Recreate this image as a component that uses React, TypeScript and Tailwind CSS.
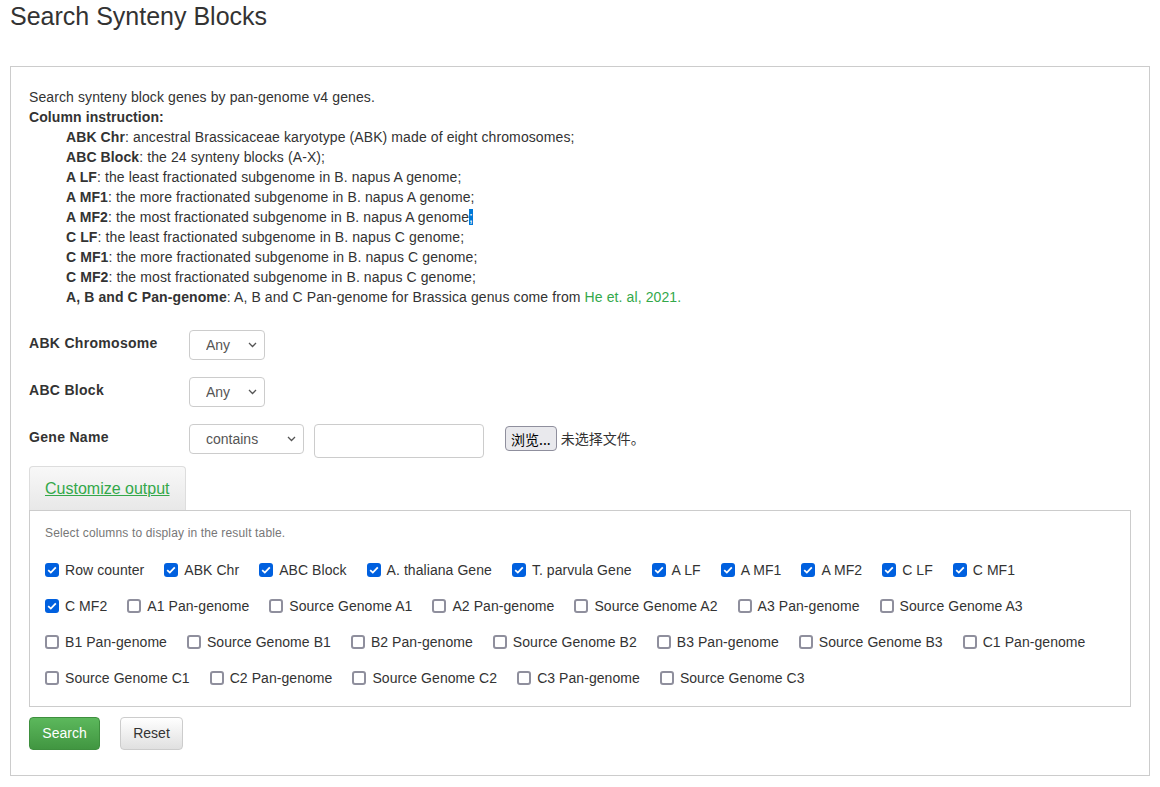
import React from "react";

const DEFS: [string, string][] = [
  ["ABK Chr", "ancestral Brassicaceae karyotype (ABK) made of eight chromosomes;"],
  ["ABC Block", "the 24 synteny blocks (A-X);"],
  ["A LF", "the least fractionated subgenome in B. napus A genome;"],
  ["A MF1", "the more fractionated subgenome in B. napus A genome;"],
  ["A MF2", "the most fractionated subgenome in B. napus A genome"],
  ["C LF", "the least fractionated subgenome in B. napus C genome;"],
  ["C MF1", "the more fractionated subgenome in B. napus C genome;"],
  ["C MF2", "the most fractionated subgenome in B. napus C genome;"],
];

const COLUMNS: [string, boolean][] = [
  ["Row counter", true],
  ["ABK Chr", true],
  ["ABC Block", true],
  ["A. thaliana Gene", true],
  ["T. parvula Gene", true],
  ["A LF", true],
  ["A MF1", true],
  ["A MF2", true],
  ["C LF", true],
  ["C MF1", true],
  ["C MF2", true],
  ["A1 Pan-genome", false],
  ["Source Genome A1", false],
  ["A2 Pan-genome", false],
  ["Source Genome A2", false],
  ["A3 Pan-genome", false],
  ["Source Genome A3", false],
  ["B1 Pan-genome", false],
  ["Source Genome B1", false],
  ["B2 Pan-genome", false],
  ["Source Genome B2", false],
  ["B3 Pan-genome", false],
  ["Source Genome B3", false],
  ["C1 Pan-genome", false],
  ["Source Genome C1", false],
  ["C2 Pan-genome", false],
  ["Source Genome C2", false],
  ["C3 Pan-genome", false],
  ["Source Genome C3", false],
];

function Chevron() {
  return (
    <svg className="pointer-events-none absolute right-[8px] top-1/2 -translate-y-1/2" width="9" height="6" viewBox="0 0 9 6">
      <path d="M1 1l3.5 3.5L8 1" fill="none" stroke="#555" strokeWidth="1.3" />
    </svg>
  );
}

function Select({ value, width }: { value: string; width: string }) {
  return (
    <div className={`relative ${width}`}>
      <select className="h-[30px] w-full appearance-none rounded-[4px] border border-[#ccc] bg-white pl-[16px] text-[14px] text-[#555]">
        <option>{value}</option>
      </select>
      <Chevron />
    </div>
  );
}

function Check({ label, checked }: { label: string; checked: boolean }) {
  return (
    <label className="mr-[20px] flex h-[36px] items-center gap-[6px] text-[14px] tracking-[0.06px] text-[#333]">
      {checked ? (
        <span className="flex h-[14px] w-[14px] items-center justify-center rounded-[3px] bg-[#0060df]">
          <svg width="10" height="8" viewBox="0 0 10 8">
            <path d="M1.2 4.2l2.6 2.4L8.8 1.4" fill="none" stroke="#fff" strokeWidth="1.8" />
          </svg>
        </span>
      ) : (
        <span className="h-[14px] w-[14px] rounded-[3px] border-2 border-[#8f8f9d] bg-white" />
      )}
      {label}
    </label>
  );
}

export default function App() {
  return (
    <div className="min-h-screen bg-white font-['Liberation_Sans',Arial,sans-serif] text-[#333]">
      <h3 className="px-[10px] text-[25px] leading-[32px]">Search Synteny Blocks</h3>

      <div className="ml-[10px] mt-[34px] w-[1140px] border border-[#ccc] px-[18px] pb-[25px] pt-[20px]">
        {/* Intro */}
        <div className="text-[14px] leading-[20px] tracking-[0.1px]">
          <p>Search synteny block genes by pan-genome v4 genes.</p>
          <p className="font-bold">Column instruction:</p>
          <div className="ml-[37px]">
            {DEFS.map(([k, v], i) => (
              <p key={k}>
                <b>{k}</b>: {v}
                {i === 4 && <span className="bg-[#0078d7] text-white">;</span>}
              </p>
            ))}
            <p>
              <b>A, B and C Pan-genome</b>: A, B and C Pan-genome for Brassica genus come from{" "}
              <a className="text-[#33a84a]">He et. al, 2021.</a>
            </p>
          </div>
        </div>

        {/* Filters */}
        <div className="mt-[23px] flex flex-col gap-[17px] text-[14px]">
          <div className="flex">
            <div className="w-[160px] pt-[3px] font-bold tracking-[0.3px]">ABK Chromosome</div>
            <Select value="Any" width="w-[76px]" />
          </div>
          <div className="flex">
            <div className="w-[160px] pt-[3px] font-bold tracking-[0.3px]">ABC Block</div>
            <Select value="Any" width="w-[76px]" />
          </div>
          <div className="flex items-start">
            <div className="w-[160px] pt-[3px] font-bold tracking-[0.3px]">Gene Name</div>
            <Select value="contains" width="w-[115px]" />
            <input className="ml-[10px] h-[34px] w-[170px] rounded-[4px] border border-[#ccc] bg-white" />
            <div className="ml-[21px] mt-[2px] flex items-center gap-[4px] font-['Noto_Sans_CJK_SC',sans-serif] text-[14px]">
              <button className="h-[25px] rounded-[4px] border border-[#8f8f9d] bg-[#e9e9ed] px-[5px] leading-[22px] text-black">
                浏览...
              </button>
              <span>未选择文件。</span>
            </div>
          </div>
        </div>

        {/* Customize output */}
        <div className="mt-[8px]">
          <div className="inline-block rounded-t-[4px] border border-b-0 border-[#ddd] bg-gradient-to-b from-[#f8f8f8] to-[#e8e8e8] px-[15px] pb-[10px] pt-[10px] text-[16px] leading-[23px]">
            <a className="text-[#33a84a] underline">Customize output</a>
          </div>
          <div className="border border-[#ccc] px-[15px] pb-[10px] pt-[14px]">
            <p className="text-[12px] leading-[17px] tracking-[0.15px] text-[#777]">Select columns to display in the result table.</p>
            <div className="mt-[10px] flex flex-wrap">
              {COLUMNS.map(([l, c]) => (
                <Check key={l} label={l} checked={c} />
              ))}
            </div>
          </div>
        </div>

        {/* Actions */}
        <div className="mt-[10px] flex gap-[20px] text-[14px]">
          <button className="h-[33px] w-[71px] rounded-[4px] border border-[#3e8f3e] bg-gradient-to-b from-[#5cb85c] to-[#419641] text-white">
            Search
          </button>
          <button className="h-[33px] w-[63px] rounded-[4px] border border-[#ccc] bg-gradient-to-b from-white to-[#e0e0e0] text-[#333]">
            Reset
          </button>
        </div>
      </div>
    </div>
  );
}
